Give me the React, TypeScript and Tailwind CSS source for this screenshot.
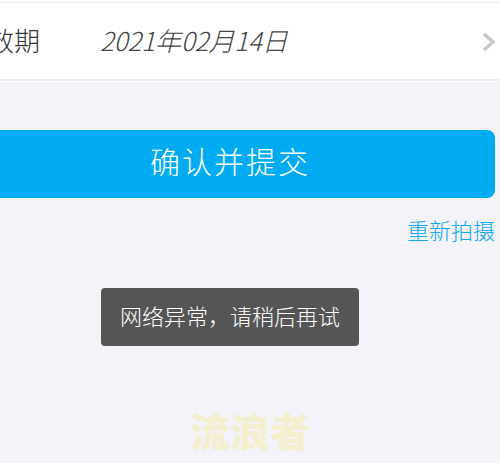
import React from "react";

const cjk = "font-['Noto_Sans_CJK_SC','Noto_Sans',sans-serif]";

export default function App() {
  return (
    <div className={`relative w-[500px] h-[463px] overflow-hidden bg-[#f3f3f9] ${cjk}`}>
      <div className="relative h-[82px] bg-white pt-[2px]">
        <div className="h-[79px] border-t border-b-2 border-[#ebebeb] flex items-center pb-[3px]">
          <span className="ml-[-38px] w-[78px] shrink-0 text-[26px] text-[#333] font-light whitespace-nowrap">有效期</span>
          <span className="ml-[60px] text-[26px] font-light italic text-[#444] whitespace-nowrap tracking-[-0.15px]">2021年02月14日</span>
        </div>
        <svg className="absolute left-[481px] top-[32px]" width="16" height="20" viewBox="0 0 16 20">
          <path d="M3 2 L12 10 L3 18" fill="none" stroke="#c7c7cc" strokeWidth="3.5" />
        </svg>
      </div>
      <div className="mt-[48px] ml-[-35px] w-[530px] h-[68px] rounded-lg bg-[#00abf1] flex items-center justify-center pb-[7px]">
        <span className="text-[30px] font-light text-white tracking-[2px]">确认并提交</span>
      </div>
      <div className="mt-[17px] pr-[5px] text-right text-[#11a9ef] text-[22px] font-light leading-[28px]">重新拍摄</div>
      <div className="absolute left-[101px] top-[288px] w-[258px] h-[58px] rounded bg-[#555] flex items-center justify-center pb-[3px] text-white text-[22px] font-light whitespace-nowrap">网络异常，请稍后再试</div>
      <div className="absolute left-0 right-0 top-[405px] text-center text-[40px] font-black text-[#f3efcf] leading-[50px]">流浪者</div>
    </div>
  );
}
